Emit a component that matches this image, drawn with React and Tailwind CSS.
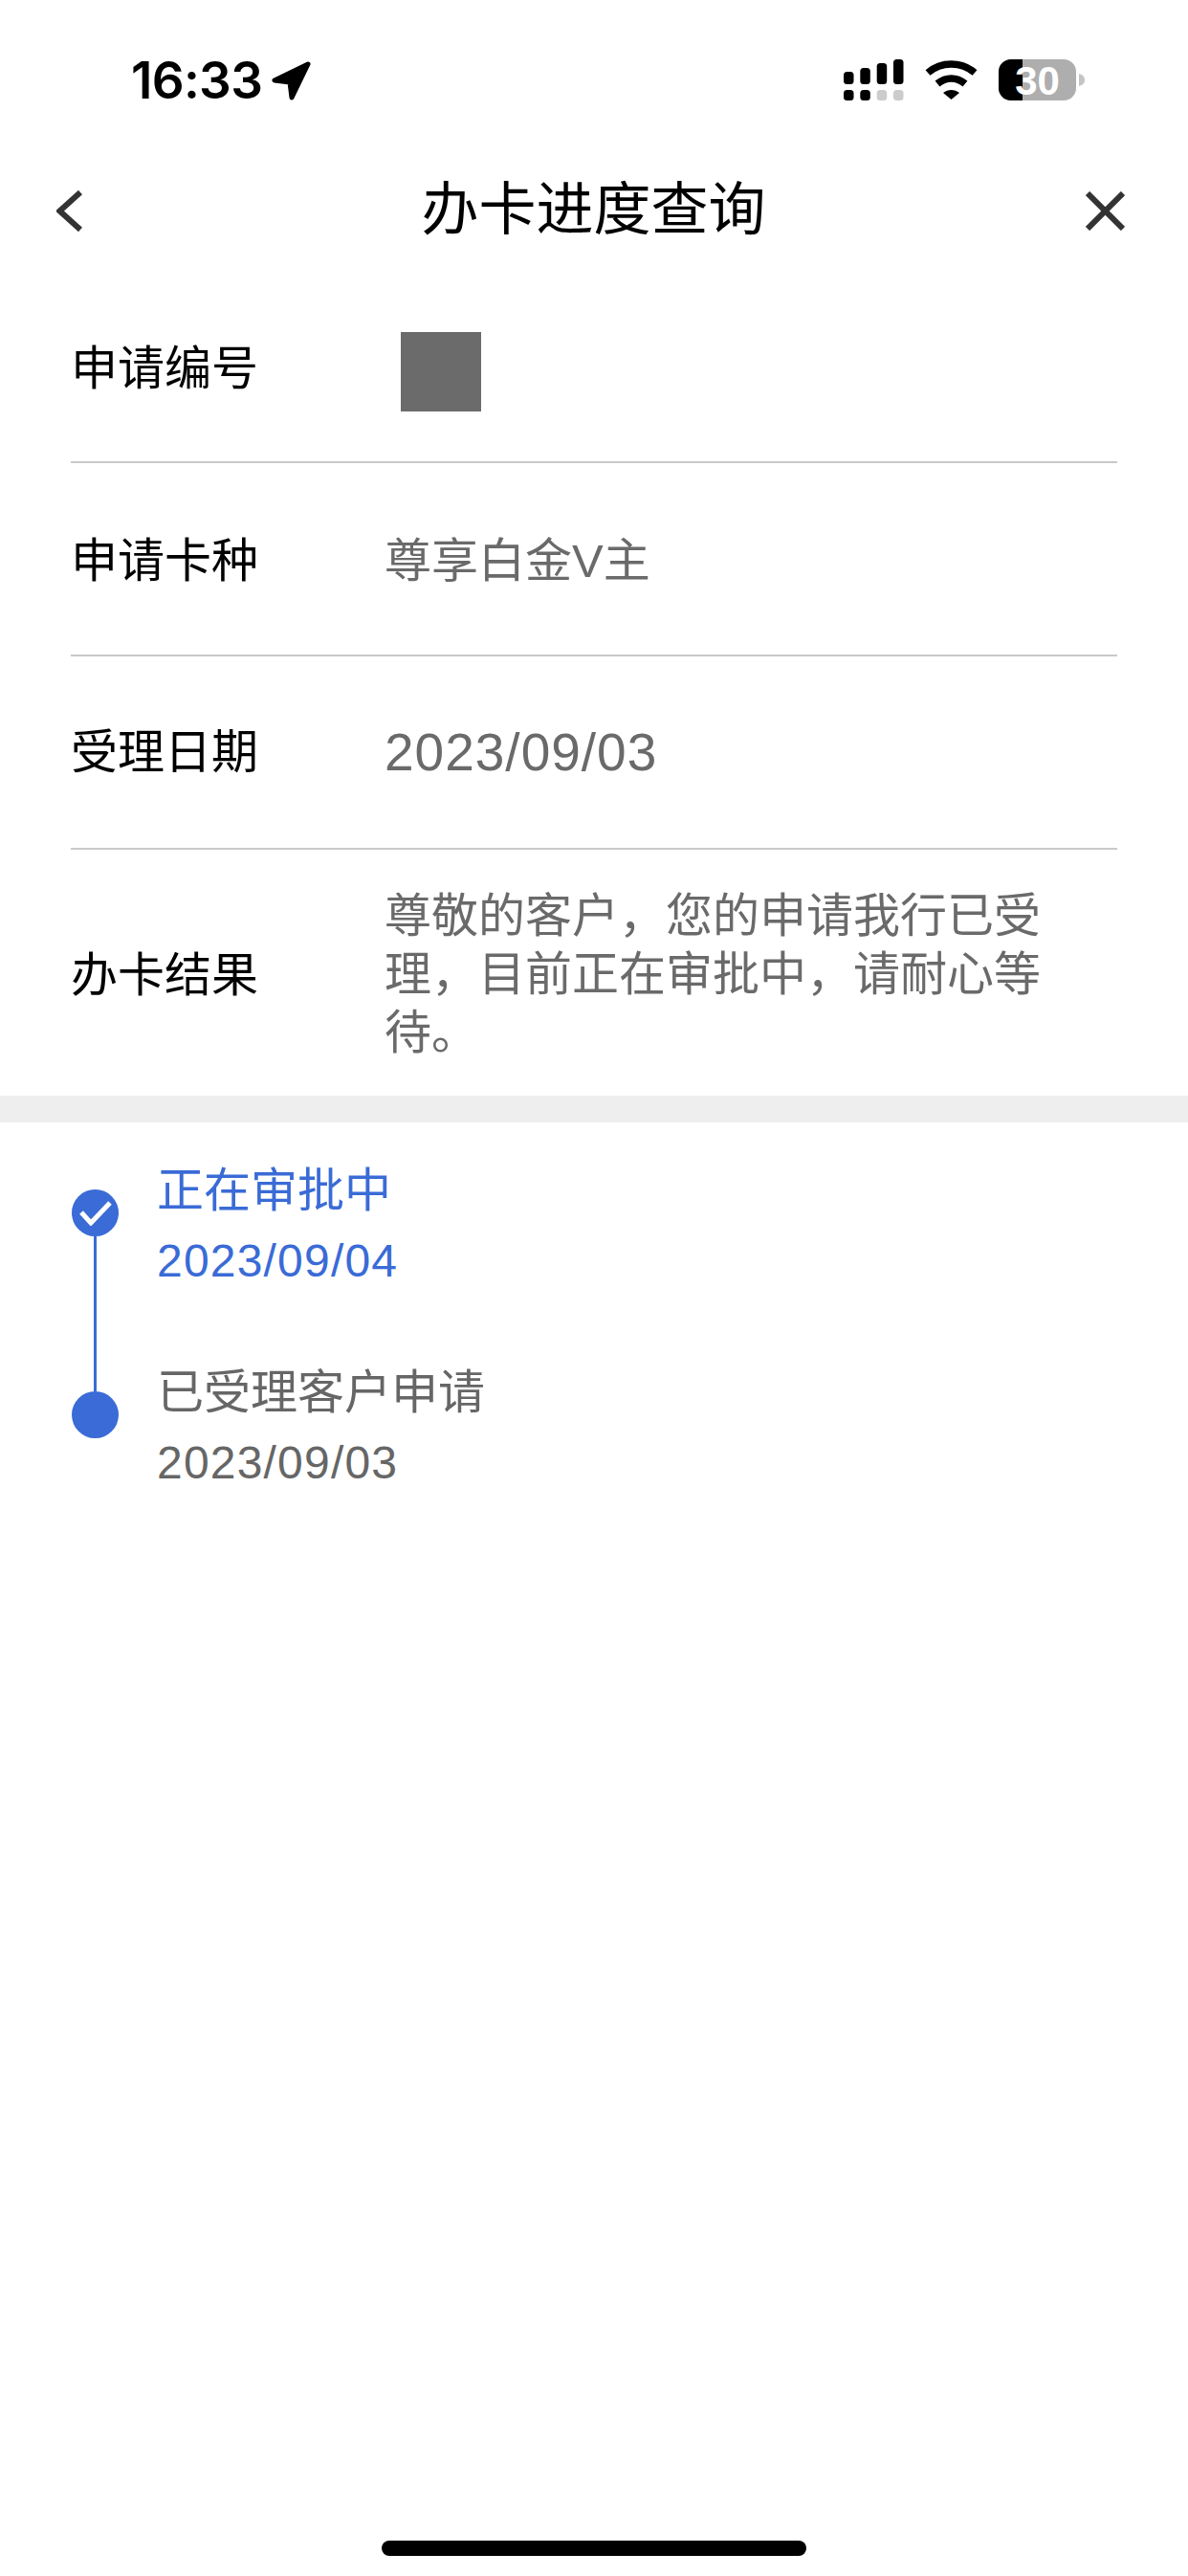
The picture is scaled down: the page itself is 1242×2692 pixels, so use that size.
const cjk = "font-['Liberation_Sans','Noto_Sans_CJK_SC',sans-serif]";

function StatusBar() {
  return (
    <div className="flex h-[160px] items-start justify-between pl-[137px] pr-[108px] pt-[62px]">
      <div className="flex items-center gap-[10px]">
        <span className="font-['Inter',sans-serif] text-[53px] font-semibold leading-[44px] tracking-[-0.7px] text-black">16:33</span>
        <svg width="41" height="41" viewBox="0 0 41 41">
          <path d="M38 3 L3 20 L19 22 L21 38 Z" fill="#000" stroke="#000" strokeWidth="5" strokeLinejoin="round" />
        </svg>
      </div>
      <div className="flex items-start">
        <svg width="63" height="43" viewBox="0 0 63 43" fill="#000">
          <rect x="0" y="13" width="10.5" height="13" rx="3.5" />
          <rect x="17.3" y="9" width="10.5" height="17" rx="3.5" />
          <rect x="34.7" y="4" width="10.5" height="22" rx="3.5" />
          <rect x="52" y="0" width="10.5" height="26" rx="3.5" />
          <rect x="0" y="32" width="10.5" height="11" rx="3.5" />
          <rect x="17.3" y="32" width="10.5" height="11" rx="3.5" />
          <rect x="34.7" y="32" width="10.5" height="11" rx="3.5" fill="#ccc" />
          <rect x="52" y="32" width="10.5" height="11" rx="3.5" fill="#ccc" />
        </svg>
        <svg className="ml-[22px] mt-[1px]" width="55" height="41" viewBox="0 0 55 41" fill="none">
          <path d="M3 13 C17 1 38 1 52 13" stroke="#000" strokeWidth="7.5" />
          <path d="M13 24.5 C22 17 33 17 42 24.5" stroke="#000" strokeWidth="7.5" />
          <path d="M19 34 C24 30 31 30 36 34 L27.5 41 Z" fill="#000" />
        </svg>
        <svg className="ml-[22px] -mt-[5px]" width="90" height="54" viewBox="0 -5 90 54">
          <rect x="0" y="0" width="81" height="43" rx="13" fill="#aeaeae" />
          <path d="M13 0 H25 V43 H13 A13 13 0 0 1 0 30 V13 A13 13 0 0 1 13 0 Z" fill="#000" />
          <path d="M84 15 C88 16 90 18 90 21.5 C90 25 88 27 84 28 Z" fill="#c4c4c4" />
          <text x="40.5" y="37" textAnchor="middle" fontFamily="Liberation Sans" fontWeight="700" fontSize="42" fill="#fff">30</text>
        </svg>
      </div>
    </div>
  );
}

function NavBar() {
  return (
    <div className="flex h-[120px] items-center justify-between pl-[59px] pr-[66px]">
      <svg width="27" height="43" viewBox="0 0 27 43" fill="none">
        <path d="M25 2 L3.5 21.5 L25 41" stroke="#333" strokeWidth="6" />
      </svg>
      <span className={`${cjk} ml-[20px] text-[60px] leading-[70px] text-black`}>办卡进度查询</span>
      <svg width="41" height="41" viewBox="0 0 41 41" fill="none">
        <path d="M2 2 L39 39 M39 2 L2 39" stroke="#333" strokeWidth="6" />
      </svg>
    </div>
  );
}

function InfoRow({ label, children, last, className }) {
  return (
    <div className={`flex items-center ${className} ${last ? '' : 'border-b-[2px] border-[#c9c9c9]'}`}>
      <span className={`${cjk} w-[328px] shrink-0 text-[49px] leading-[60px] text-black`}>{label}</span>
      {children}
    </div>
  );
}

function Value({ children, className = '' }) {
  return <span className={`${cjk} text-[#6a6a6a] ${className}`}>{children}</span>;
}

function TimelineItem({ title, date, active, check, last }) {
  const color = active ? 'text-[#3a6bd6]' : 'text-[#666]';
  return (
    <div className="flex h-[211px]">
      <div className="flex w-[49px] flex-col items-center">
        <div className="flex h-[49px] w-[49px] shrink-0 items-center justify-center rounded-full bg-[#3a6bd6]">
          {check && (
            <svg width="36" height="26" viewBox="0 0 36 26" fill="none">
              <path d="M3 12 L13 23 L33 2" stroke="#fff" strokeWidth="5" />
            </svg>
          )}
        </div>
        {!last && <div className="w-[3px] grow bg-[#3a6bd6]" />}
      </div>
      <div className={`ml-[40px] -mt-[32px] flex flex-col ${color}`}>
        <span className={`${cjk} text-[49px] leading-[66px]`}>{title}</span>
        <span className={`${cjk} mt-[11px] text-[48px] leading-[60px] tracking-[1.2px]`}>{date}</span>
      </div>
    </div>
  );
}

export default function App() {
  return (
    <div className="flex h-[2692px] flex-col bg-white">
      <StatusBar />
      <NavBar />

      <div className="px-[74px]">
        <InfoRow label="申请编号" className="h-[204px] pt-[7px]">
          <div className="ml-[17px] mt-[7px] h-[83px] w-[84px] bg-[#6b6b6b]" />
        </InfoRow>
        <InfoRow label="申请卡种" className="h-[202px] pt-[4px]">
          <Value className="text-[49px] leading-[60px]">尊享白金V主</Value>
        </InfoRow>
        <InfoRow label="受理日期" className="h-[202px]">
          <Value className="text-[55px] leading-[60px] tracking-[1px]">2023/09/03</Value>
        </InfoRow>
        <InfoRow label="办卡结果" last className="h-[257px] pt-[4px]">
          <Value className="w-[700px] text-[49px] leading-[61px]">尊敬的客户，您的申请我行已受理，目前正在审批中，请耐心等待。</Value>
        </InfoRow>
      </div>

      <div className="h-[28px] bg-[#eeeeee]" />

      <div className="px-[75px] pt-[70px]">
        <TimelineItem title="正在审批中" date="2023/09/04" active check />
        <TimelineItem title="已受理客户申请" date="2023/09/03" last />
      </div>

      <div className="mt-auto flex justify-center pb-[21px]">
        <div className="h-[16px] w-[444px] rounded-full bg-black" />
      </div>
    </div>
  );
}
